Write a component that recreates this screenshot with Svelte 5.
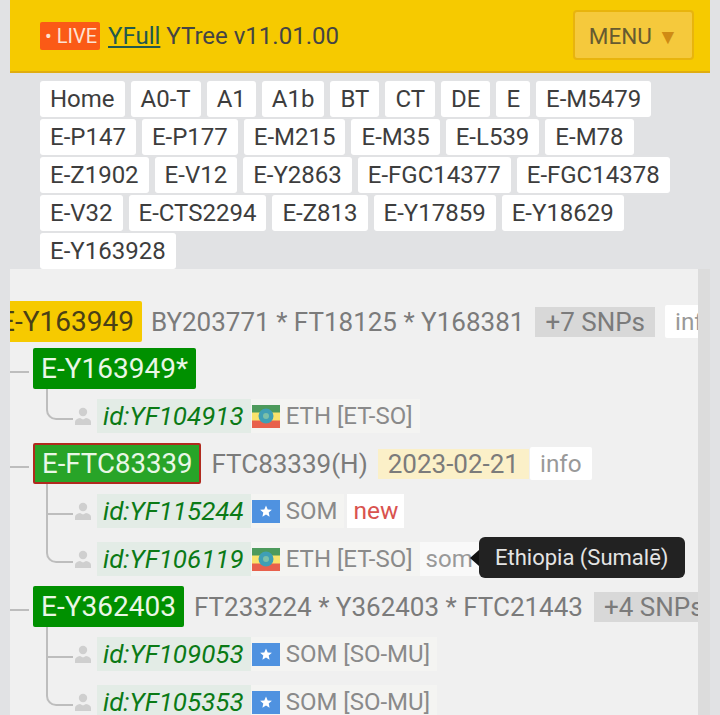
<script lang="ts">
    const crumbs = [
        "Home", "A0-T", "A1", "A1b", "BT", "CT", "DE", "E", "E-M5479",
        "E-P147", "E-P177", "E-M215", "E-M35", "E-L539", "E-M78",
        "E-Z1902", "E-V12", "E-Y2863", "E-FGC14377", "E-FGC14378",
        "E-V32", "E-CTS2294", "E-Z813", "E-Y17859", "E-Y18629",
        "E-Y163928",
    ];

    const nodes = [
        {
            name: "E-Y163949*",
            leaves: [{ id: "id:YF104913", flag: "eth", place: "ETH [ET-SO]" }],
        },
        {
            name: "E-FTC83339",
            current: true,
            snps: "FTC83339(H)",
            date: "2023-02-21",
            info: true,
            leaves: [
                { id: "id:YF115244", flag: "som", place: "SOM", tag: "new" },
                { id: "id:YF106119", flag: "eth", place: "ETH [ET-SO]", lang: "som", tip: "Ethiopia (Sumalē)" },
            ],
        },
        {
            name: "E-Y362403",
            snps: "FT233224 * Y362403 * FTC21443",
            more: "+4 SNPs",
            leaves: [
                { id: "id:YF109053", flag: "som", place: "SOM [SO-MU]" },
                { id: "id:YF105353", flag: "som", place: "SOM [SO-MU]" },
            ],
        },
    ];
</script>

<header class="top">
    <div class="title">
        <span class="live">• LIVE</span>
        <a href="#home">YFull</a>
        <span>YTree v11.01.00</span>
    </div>
    <button class="menu">MENU <i>▼</i></button>
</header>

<nav class="crumbs">
    {#each crumbs as c}
        <span class="crumb">{c}</span>
    {/each}
</nav>

<main class="shell">
    <section class="tree">
        <div class="root">
            <span class="clade">E-Y163949</span>
            <span class="snps">BY203771 * FT18125 * Y168381</span>
            <span class="more">+7 SNPs</span>
            <span class="info">info</span>
        </div>

        {#each nodes as node}
            <div class="branch">
                <div class="node">
                    <span class="pill" class:current={node.current}>{node.name}</span>
                    {#if node.snps}<span class="snps">{node.snps}</span>{/if}
                    {#if node.date}<span class="date">{node.date}</span>{/if}
                    {#if node.info}<span class="info tight">info</span>{/if}
                    {#if node.more}<span class="more">{node.more}</span>{/if}
                </div>
                {#each node.leaves as leaf}
                    <div class="leaf">
                        <svg class="person" viewBox="0 0 16 18" aria-hidden="true">
                            <circle cx="8" cy="5" r="4.2" />
                            <path d="M0 18v-3c0-2 2-3.400 5-4l3 1.500 3-1.500c3 .6 5 2 5 4v3z" />
                        </svg>
                        <span class="id">{leaf.id}</span>
                        <span class="origin">
                            {#if leaf.flag === "eth"}
                                <svg class="flag" viewBox="0 0 28 23" aria-hidden="true">
                                    <rect width="28" height="23" fill="#fae36b" />
                                    <rect width="28" height="7.500" fill="#4d9a5c" />
                                    <rect y="15.500" width="28" height="7.500" fill="#e8604c" />
                                    <circle cx="14" cy="11" r="7.500" fill="#3f9fb5" />
                                    <circle cx="14" cy="11" r="3" fill="#7cc0a8" />
                                </svg>
                            {:else}
                                <svg class="flag" viewBox="0 0 28 23" aria-hidden="true">
                                    <rect width="28" height="23" fill="#4f92e0" />
                                    <path d="M14 5.500l1.700 3.900 4.200.4-3.200 2.800.9 4.100-3.600-2.200-3.600 2.200.9-4.100-3.200-2.800 4.200-.4z" fill="#fff" />
                                </svg>
                            {/if}
                            {leaf.place}
                        </span>
                        {#if leaf.tag}<span class="new">{leaf.tag}</span>{/if}
                        {#if leaf.lang}
                            <span class="lang">{leaf.lang}</span>
                            <span class="tip">{leaf.tip}</span>
                        {/if}
                    </div>
                {/each}
            </div>
        {/each}
    </section>
    <div class="scroll"></div>
</main>

<style>
    :global(body) {
        margin: 0;
        background: #e1e2e4;
        font-family: Roboto, "Liberation Sans", sans-serif;
        height: 715px;
        overflow: hidden;
    }

    .top {
        margin: 0 10px;
        height: 71px;
        background: #f6ca00;
        border-bottom: 2px solid #e0ad10;
        display: flex;
        align-items: center;
        justify-content: space-between;
        padding: 0 16px 0 30px;
        color: #444;
        font-size: 24px;
    }

    .title {
        display: flex;
        align-items: center;
        gap: 6px;
    }

    .title a {
        color: #22584f;
        margin-left: 2px;
    }

    .live {
        background: #fb5a16;
        color: #fde3d3;
        font-size: 20px;
        line-height: 28px;
        padding: 0 3px 0 5px;
        border-radius: 2px;
    }

    .menu {
        width: 121px;
        height: 50px;
        background: #f5c93c;
        border: 2px solid #e8b40d;
        border-radius: 4px;
        font: inherit;
        font-size: 22.500px;
        color: #665a30;
        padding: 2px 0 0;
        margin-top: -1px;
    }

    .menu i {
        font-style: normal;
        font-size: 21px;
        color: #cf8b14;
    }

    .crumbs {
        display: flex;
        flex-wrap: wrap;
        gap: 2px 6px;
        padding: 8px 40px 0;
        height: 188px;
        align-content: flex-start;
    }

    .crumb {
        background: #fff;
        color: #3d3d3d;
        font-size: 24px;
        line-height: 36px;
        padding: 0 10px;
        border-radius: 3px;
    }

    .shell {
        display: flex;
        margin: 0 10px;
        height: 446px;
    }

    .tree {
        width: 688px;
        flex-shrink: 0;
        background: #f0f0f0;
        overflow: hidden;
        padding-top: 32px;
        font-size: 26px;
        color: #7b7b7b;
    }

    .scroll {
        flex: 1;
        background: #dcdcdc;
    }

    .root,
    .node,
    .leaf {
        display: flex;
        align-items: center;
        white-space: nowrap;
    }

    .root {
        margin-left: -11px;
        height: 41px;
        margin-bottom: 6px;
    }

    .clade {
        background: #f6ca00;
        color: #4a4016;
        font-size: 28px;
        line-height: 41px;
        padding: 0 8px 0 0;
        border-radius: 2px;
        margin-right: 9px;
    }

    .more {
        background: #d8d8d8;
        line-height: 30px;
        padding: 0 10px;
        margin-left: 11px;
        color: #7b7b7b;
    }

    .info {
        background: #fff;
        color: #999;
        font-size: 24.300px;
        line-height: 33px;
        padding: 0 10px;
        margin-left: 10px;
        border-radius: 2px;
    }

    .info.tight {
        margin-left: 1px;
    }

    .branch {
        margin-bottom: 10px;
    }

    .node {
        position: relative;
        z-index: 1;
        height: 41px;
        margin-left: 23px;
        margin-bottom: 10px;
    }

    .node::before {
        content: "";
        position: absolute;
        left: -23px;
        top: 23px;
        width: 19px;
        border-top: 2px solid #bdbdbd;
    }

    .pill {
        background: #009000;
        color: #e9f7e6;
        font-size: 28px;
        line-height: 41px;
        padding: 0 8px;
        border-radius: 2px;
        box-sizing: border-box;
        height: 41px;
        margin-right: 10px;
    }

    .pill.current {
        background: #28a428;
        border: 2px solid #b02a1e;
        font-size: 27.600px;
        line-height: 37px;
        padding: 0 7px;
    }

    .date {
        background: #fbf0c8;
        line-height: 30px;
        padding: 0 10px;
        margin-left: 10px;
    }

    .leaf {
        position: relative;
        height: 34px;
        margin-left: 65px;
        margin-bottom: 14px;
    }

    .leaf:last-child {
        margin-bottom: 0;
    }

    .leaf::before {
        content: "";
        position: absolute;
        left: -29px;
        bottom: 13px;
        width: 25px;
        height: 46px;
        border-left: 2px solid #bdbdbd;
        border-bottom: 2px solid #bdbdbd;
    }

    .leaf:last-child::before {
        border-bottom-left-radius: 10px;
    }

    .person {
        width: 16px;
        height: 18px;
        fill: #cfcfcf;
        margin-right: 6px;
        flex-shrink: 0;
    }

    .id {
        background: #e3ece6;
        color: #0b7a16;
        font-style: italic;
        line-height: 34px;
        padding: 0 7px 0 6px;
    }

    .origin {
        display: flex;
        align-items: center;
        gap: 6px;
        background: #f4f4f2;
        color: #8a8a8a;
        line-height: 34px;
        padding: 0 7px 0 1px;
        font-size: 24px;
    }

    .flag {
        width: 28px;
        height: 23px;
        flex-shrink: 0;
    }

    .new {
        background: #fff;
        color: #d9534f;
        line-height: 34px;
        padding: 0 6px;
        margin-left: 3px;
        font-size: 24.500px;
    }

    .lang {
        background: #f9f9f9;
        color: #999;
        line-height: 34px;
        padding: 0 6px;
        font-size: 24px;
    }

    .tip {
        position: absolute;
        left: 404px;
        top: -5px;
        background: #222;
        color: #e4e4e4;
        font-size: 22px;
        line-height: 41px;
        padding: 0 16px;
        border-radius: 6px;
    }

    .tip::before {
        content: "";
        position: absolute;
        left: -9px;
        top: 13px;
        border: 8px solid transparent;
        border-left: 0;
        border-right: 9px solid #111;
    }
</style>
